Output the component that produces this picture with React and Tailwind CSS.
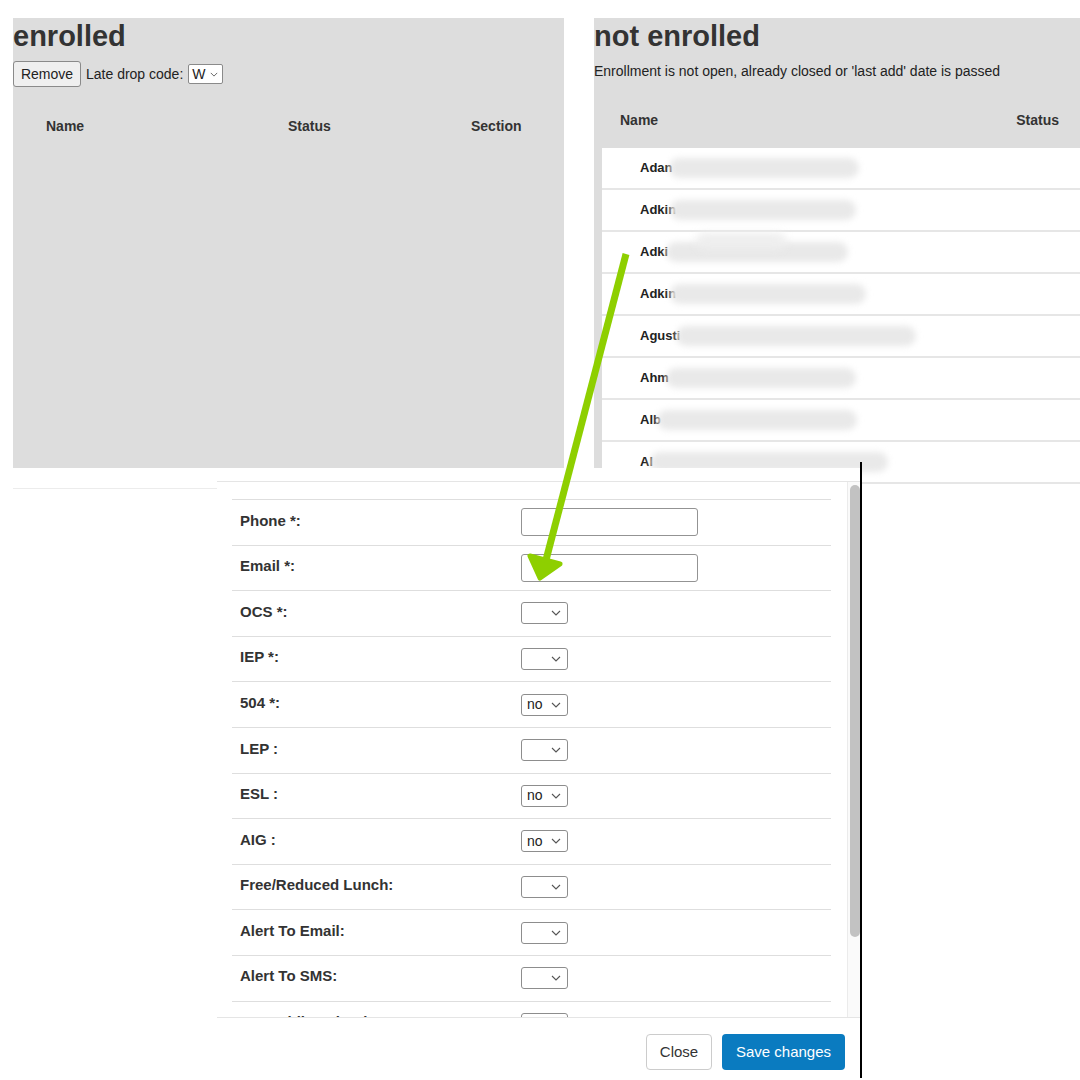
import React from "react";

const students = [
  { name: "Adan", blob: 190, shift: -4 },
  { name: "Adkin", blob: 186, shift: -6 },
  { name: "Adki", blob: 182, shift: -2, bump: true },
  { name: "Adkin", blob: 196, shift: -6 },
  { name: "Agusti", blob: 240, shift: -4 },
  { name: "Ahm", blob: 190, shift: -3 },
  { name: "Alb", blob: 200, shift: -4 },
  { name: "Al", blob: 238, shift: -3 },
];

const fields = [
  { label: "Phone *:", kind: "text" },
  { label: "Email *:", kind: "text" },
  { label: "OCS *:", kind: "select", value: "" },
  { label: "IEP *:", kind: "select", value: "" },
  { label: "504 *:", kind: "select", value: "no" },
  { label: "LEP :", kind: "select", value: "" },
  { label: "ESL :", kind: "select", value: "no" },
  { label: "AIG :", kind: "select", value: "no" },
  { label: "Free/Reduced Lunch:", kind: "select", value: "" },
  { label: "Alert To Email:", kind: "select", value: "" },
  { label: "Alert To SMS:", kind: "select", value: "" },
  { label: "Nonpublic School:", kind: "select", value: "" },
];

function Chevron({ className }) {
  return (
    <svg viewBox="0 0 10 6" className={className} fill="none" stroke="#555" strokeWidth="1.1">
      <path d="M1 1l4 4 4-4" />
    </svg>
  );
}

function FakeSelect({ value }) {
  return (
    <div className="flex h-[22px] w-[47px] items-center justify-between rounded-[3px] border border-[#8d8d8d] bg-white pl-[5px] pr-[6px] text-[14px] text-[#222]">
      <span>{value}</span>
      <Chevron className="h-[6px] w-[10px]" />
    </div>
  );
}

function FieldRow({ field }) {
  return (
    <div className="flex h-[45.6px] shrink-0 items-center border-t border-[#dedede]">
      <div className="w-[289px] pb-[3px] pl-[8px] text-[15px] font-bold text-[#333]">{field.label}</div>
      {field.kind === "text" ? (
        <div className="h-[28px] w-[177px] rounded-[3px] border border-[#939393] bg-white" />
      ) : (
        <FakeSelect value={field.value} />
      )}
    </div>
  );
}

export default function App() {
  return (
    <div className="relative h-[1080px] w-[1080px] overflow-hidden bg-white font-['Liberation_Sans',Arial,sans-serif] text-[#333]">
      <div className="flex pt-[18px]">
        {/* enrolled */}
        <section className="ml-[13px] w-[551px]">
          <div className="h-[450px] bg-[#dddddd]">
            <h2 className="h-[36px] text-[29px] font-bold leading-[36px] text-[#333]">enrolled</h2>
            <div className="mt-[7px] flex items-center text-[14px] text-[#222]">
              <button className="h-[26px] w-[68px] rounded-[3px] border border-[#8a8a8a] bg-[#efefef] text-[14px]">
                Remove
              </button>
              <span className="ml-[5px]">Late drop code:</span>
              <div className="ml-[5px] flex h-[20px] w-[35px] items-center justify-between rounded-[2px] border border-[#8a8a8a] bg-white pl-[3px] pr-[4px]">
                <span>W</span>
                <Chevron className="h-[5px] w-[8px]" />
              </div>
            </div>
            <div className="mt-[22px] flex h-[34px] items-center text-[14px] font-bold">
              <div className="w-[275px] pl-[33px]">Name</div>
              <div className="w-[183px]">Status</div>
              <div>Section</div>
            </div>
          </div>
          <div className="h-[21px] border-b border-[#ececec]" />
        </section>

        {/* not enrolled */}
        <section className="ml-[30px] flex-1">
          <div className="h-[450px] bg-[#dddddd]">
            <h2 className="h-[36px] text-[29px] font-bold leading-[36px] text-[#333]">not enrolled</h2>
            <p className="mt-[7px] text-[14px] leading-[20px] text-[#222]">
              Enrollment is not open, already closed or 'last add' date is passed
            </p>
            <div className="ml-[8px] mt-[11px] flex h-[56px] items-center justify-between pl-[18px] pr-[21px] text-[14px] font-bold">
              <span>Name</span>
              <span>Status</span>
            </div>
            <div className="ml-[8px]">
              {students.map((s, i) => (
                <div key={i} className="flex h-[42px] items-center border-b-2 border-[#e6e6e6] bg-white pl-[38px] text-[13px] font-bold text-[#222]">
                  <span>{s.name}</span>
                  <span className="relative h-[20px]" style={{ width: s.blob, marginLeft: s.shift }}>
                    <span className="absolute inset-0 rounded-full bg-[#e9e9e9] blur-[3px]" />
                    {s.bump && (
                      <span className="absolute -top-[9px] left-[30px] h-[16px] w-[90px] rounded-full bg-[#eeeeee] blur-[4px]" />
                    )}
                  </span>
                </div>
              ))}
            </div>
          </div>
        </section>
      </div>

      {/* modal */}
      <div className="absolute left-[217px] top-[468px] flex h-[612px] w-[645px] flex-col bg-white">
        <div className="h-[14px] shrink-0 border-b border-[#e5e5e5]" />
        <div className="flex h-[535px] shrink-0">
          <div className="flex flex-1 flex-col overflow-hidden pl-[15px] pr-[16px] pt-[17px]">
            {fields.map((f) => (
              <FieldRow key={f.label} field={f} />
            ))}
          </div>
          <div className="w-[15px] border-l border-[#ebebeb] bg-[#fafafa] pt-[3px]">
            <div className="ml-[2px] h-[452px] w-[10px] rounded-full bg-[#c2c2c2]" />
          </div>
        </div>
        <div className="flex flex-1 items-start justify-end gap-[10px] border-t border-[#e5e5e5] pr-[17px] pt-[16px]">
          <button className="h-[36px] w-[66px] rounded-[4px] border border-[#cccccc] bg-white text-[15px] text-[#333]">
            Close
          </button>
          <button className="h-[36px] w-[123px] rounded-[4px] bg-[#0a7bc0] text-[15px] text-white">
            Save changes
          </button>
        </div>
      </div>
      <div className="absolute left-[860px] top-[462px] h-[616px] w-[2px] bg-black" />

      {/* arrow overlay */}
      <svg className="pointer-events-none absolute left-0 top-0" width="1080" height="1080" viewBox="0 0 1080 1080">
        <line x1="626" y1="254" x2="546" y2="560" stroke="#8ecf00" strokeWidth="7" strokeLinecap="butt" />
        <polygon points="530,556 560,564 540,578" fill="#8ecf00" stroke="#8ecf00" strokeWidth="5" strokeLinejoin="round" />
      </svg>
    </div>
  );
}
